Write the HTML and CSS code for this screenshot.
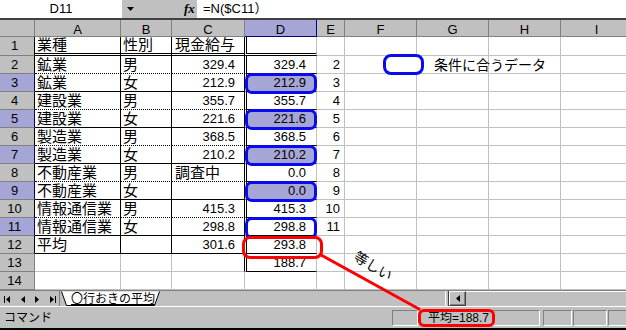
FILE: index.html
```html
<!DOCTYPE html>
<html lang="ja">
<head>
<meta charset="utf-8">
<title>行おきの平均</title>
<link rel="stylesheet" href="styles.css">
</head>
<body>
<div class="app">
  <div class="fbar">
    <div class="namebox">D11</div>
    <div class="fbtns">
      <svg class="dd" width="7" height="4" viewBox="0 0 7 4"><path d="M0 0h7L3.5 4z"/></svg>
      <span class="fx"><i>f</i>x</span>
    </div>
    <div class="formula">=N($C11）</div>
  </div>

  <div class="sheet">
    <div class="ch"></div><div class="ch">A</div><div class="ch">B</div><div class="ch">C</div><div class="ch sel">D</div><div class="ch">E</div><div class="ch">F</div><div class="ch">G</div><div class="ch">H</div><div class="ch">I</div>

    <div class="rh tb">1</div><div class="a x bdbl t">業種</div><div class="b x bdbl t">性別</div><div class="cc x bdbl t">現金給与</div><div class="d dl bdbl"></div><div class="e"></div><div></div><div></div><div></div><div></div>

    <div class="rh tb">2</div><div class="a x bd t">鉱業</div><div class="b x bd t">男</div><div class="cc x bd n">329.4</div><div class="d dl bs n">329.4</div><div class="e">2</div><div class="f"><div class="legend"><span class="lbox"></span><span class="ltxt">条件に合うデータ</span></div></div><div></div><div></div><div></div>

    <div class="rh tb sel">3</div><div class="a x bs t">鉱業</div><div class="b x bs t">女</div><div class="cc x bs n">212.9</div><div class="d dl bs"><div class="hl">212.9</div></div><div class="e">3</div><div></div><div></div><div></div><div></div>

    <div class="rh tb">4</div><div class="a x bd t">建設業</div><div class="b x bd t">男</div><div class="cc x bd n">355.7</div><div class="d dl bs n">355.7</div><div class="e">4</div><div></div><div></div><div></div><div></div>

    <div class="rh tb sel">5</div><div class="a x bs t">建設業</div><div class="b x bs t">女</div><div class="cc x bs n">221.6</div><div class="d dl bs"><div class="hl">221.6</div></div><div class="e">5</div><div></div><div></div><div></div><div></div>

    <div class="rh tb">6</div><div class="a x bd t">製造業</div><div class="b x bd t">男</div><div class="cc x bd n">368.5</div><div class="d dl bs n">368.5</div><div class="e">6</div><div></div><div></div><div></div><div></div>

    <div class="rh tb sel">7</div><div class="a x bs t">製造業</div><div class="b x bs t">女</div><div class="cc x bs n">210.2</div><div class="d dl bs"><div class="hl">210.2</div></div><div class="e">7</div><div></div><div></div><div></div><div></div>

    <div class="rh tb">8</div><div class="a x bd t">不動産業</div><div class="b x bd t">男</div><div class="cc x bd t">調査中</div><div class="d dl bs n">0.0</div><div class="e">8</div><div></div><div></div><div></div><div></div>

    <div class="rh tb sel">9</div><div class="a x bs t">不動産業</div><div class="b x bs t">女</div><div class="cc x bs"></div><div class="d dl bs"><div class="hl">0.0</div></div><div class="e">9</div><div></div><div></div><div></div><div></div>

    <div class="rh tb">10</div><div class="a x bd t">情報通信業</div><div class="b x bd t">男</div><div class="cc x bd n">415.3</div><div class="d dl bs n">415.3</div><div class="e">10</div><div></div><div></div><div></div><div></div>

    <div class="rh tb sel">11</div><div class="a x bs t">情報通信業</div><div class="b x bs t">女</div><div class="cc x bs n">298.8</div><div class="d dl bs n">298.8<div class="ol"></div></div><div class="e">11</div><div></div><div></div><div></div><div></div>

    <div class="rh tb">12</div><div class="a x bs t">平均</div><div class="b x bs"></div><div class="cc x bs n">301.6</div><div class="d dl bs n">293.8<div class="rb"></div></div><div class="e"></div><div></div><div></div><div></div><div></div>

    <div class="rh">13</div><div class="a"></div><div class="b"></div><div class="cc x"></div><div class="d dl bs n">188.7</div><div class="e"></div><div></div><div></div><div></div><div></div>

    <div class="rh">14</div><div class="a"></div><div class="b"></div><div class="cc"></div><div class="d"></div><div class="e"></div><div></div><div></div><div></div><div></div>
  </div>

  <div class="tabbar">
    <svg class="nav" width="59" height="15" viewBox="0 0 59 15">
      <rect x="4" y="5" width="1" height="7"/>
      <path d="M10 5v7L6 8.5z"/>
      <path d="M25 5v7L21 8.5z"/>
      <path d="M35 5v7L39 8.5z"/>
      <path d="M50 5v7L54 8.5z"/>
      <rect x="55" y="5" width="1" height="7"/>
    </svg>
    <div class="tab">
      <svg class="tabshape" width="104" height="15" viewBox="0 0 104 15"><path d="M0.5 0v15" stroke="#808080" fill="none"/><path d="M2.5 0.5 L7.5 14.5 L95.5 14.5 L100.5 0.5" fill="#fff" stroke="#000"/></svg>
      <span class="tabtxt">〇行おきの平均</span>
    </div>
    <div class="hs">
      <div class="split"></div>
      <div class="sbtn"><svg width="4" height="7" viewBox="0 0 4 7"><path d="M4 0v7L0 3.5z"/></svg></div>
      <div class="track"></div>
    </div>
  </div>

  <div class="status">
    <div class="msg">コマンド</div>
    <div class="p p1"></div>
    <div class="p p2">平均=188.7<div class="rbs"></div></div>
    <div class="p p3"></div>
    <div class="p p4"></div>
    <div class="p p5"></div>
  </div>

  <svg class="callout" width="626" height="330" viewBox="0 0 626 330">
    <line x1="321" y1="255" x2="419" y2="309" stroke="#ff0000" stroke-width="3" stroke-linecap="round"/>
    <text x="373" y="271" transform="rotate(31 373 266)" text-anchor="middle" class="eq">等しい</text>
  </svg>
</div>
</body>
</html>
```

FILE: styles.css
```css
* { box-sizing: border-box; margin: 0; padding: 0; }
html, body { width: 626px; height: 330px; overflow: hidden; background: #fff; }
body {
  font-family: "Liberation Sans", "Noto Sans CJK JP", sans-serif;
  font-size: 13px;
  color: #000;
}
.app { position: relative; width: 626px; height: 330px; overflow: hidden; }

/* formula bar */
.fbar { display: flex; height: 20px; border-bottom: 2px solid #404040; }
.namebox { width: 122px; flex: none; text-align: center; line-height: 18px; }
.fbtns { width: 75px; flex: none; background: #c0c0c0; display: flex; align-items: center; }
.dd { margin-left: 5px; display: block; }
.fx { margin-left: 50px; font-family: "Liberation Serif", serif; font-style: italic; font-weight: bold; font-size: 13px; line-height: 18px; }
.formula { flex: 1; padding-left: 6px; line-height: 18px; }

/* grid */
.sheet {
  display: grid;
  grid-template-columns: 35px 86px 51px 73px 72px 28px 72px 72px 72px 72px;
  grid-template-rows: 17px 19px repeat(13, 18px);
  width: 633px;
}
.sheet > div {
  border-right: 1px solid #c0c0c0;
  border-bottom: 1px solid #c0c0c0;
  white-space: nowrap;
  line-height: 17px;
  position: relative;
}
.sheet > .ch {
  background: #c0c0c0;
  border-right-color: #808080;
  border-bottom-color: #808080;
  text-align: center;
  line-height: 16px;
  padding-top: 2px;
}
.sheet > .ch.sel { background: #a6a6d6; border-right-color: #000080; border-bottom-color: #000080; }
.sheet > .rh {
  background: #c0c0c0;
  border-right-color: #808080;
  border-bottom-color: #808080;
  text-align: center;
  padding-right: 5px;
}
.sheet > .rh.tb { border-right-color: #000; }
.sheet > .rh.sel { background: #a6a6d6; border-right-color: #000080; }

.sheet > .a { padding-left: 2px; }
.sheet > .b { padding-left: 2px; }
.sheet > .cc { padding-left: 3px; }
.sheet > .n { text-align: right; }
.sheet > .cc.n { padding-left: 0; padding-right: 9px; }
.sheet > .d.n { padding-right: 10px; }
.sheet > .e { text-align: right; padding-right: 4px; }
.sheet > .t { font-size: 15px; }

.sheet > .x { border-right-color: #000; }
.sheet > .bd { border-bottom: 1px dotted #000; }
.sheet > .bs { border-bottom-color: #000; }
.sheet > .bdbl { border-bottom: 3px double #000; line-height: 16px; }
.sheet > .dl { border-left: 1px solid #fff; box-shadow: inset 1px 0 0 #000; }

.hl {
  position: absolute;
  left: -1px; top: -1px;
  width: 72px; height: 21px;
  border: 3px solid #0a0af0;
  border-radius: 7px;
  background: #a6a6d6;
  text-align: right;
  padding-right: 8px;
  line-height: 13px;
}
.ol {
  position: absolute;
  left: -1px; top: -1px;
  width: 72px; height: 22px;
  border: 3px solid #0a0af0;
  border-radius: 7px;
}
.rb {
  position: absolute;
  left: -4px; top: 0;
  width: 81px; height: 23px;
  border: 3px solid #ff0000;
  border-radius: 8px;
  z-index: 2;
}

.legend { position: absolute; left: 38px; top: -2px; display: flex; align-items: center; z-index: 1; }
.lbox { width: 41px; height: 21px; border: 3px solid #0a0af0; border-radius: 8px; background: #fff; }
.ltxt { margin-left: 10px; font-size: 14px; line-height: 20px; }

/* sheet tabs */
.tabbar { display: flex; height: 16px; background: #c0c0c0; border-top: 1px solid #808080; }
.nav { display: block; flex: none; }
.tab { position: relative; width: 104px; height: 15px; flex: none; padding-left: 12px; }
.tabshape { position: absolute; left: 0; top: 0; }
.tabtxt { position: relative; font-family: "Noto Sans CJK JP", sans-serif; font-size: 12px; line-height: 14px; text-decoration: underline; }
.hs { margin-left: auto; width: 181px; flex: none; display: flex; height: 15px; }
.split { width: 4px; border-left: 1px solid #fff; border-right: 1px solid #404040; background: #c0c0c0; }
.sbtn {
  width: 17px;
  border-top: 1px solid #fff; border-left: 1px solid #fff;
  border-right: 1px solid #404040; border-bottom: 1px solid #404040;
  box-shadow: inset -1px -1px 0 #808080;
  display: flex; align-items: center; justify-content: center;
}
.sbtn svg { display: block; }
.track { flex: 1; border-top: 1px solid #fff; background: #c0c0c0; }

/* status bar */
.status {
  display: flex; align-items: center;
  height: 24px;
  background: #c0c0c0;
  border-top: 1px solid #fff;
  border-bottom: 2px solid #000;
  overflow: hidden;
}
.msg { width: 392px; flex: none; padding-left: 4px; font-size: 12px; line-height: 14px; }
.p {
  height: 16px;
  border: 1px solid; border-color: #808080 #fff #fff #808080;
  font-size: 12px; line-height: 14px;
  position: relative; flex: none;
}
.p1 { width: 26px; }
.p2 { width: 120px; margin-left: 2px; padding-left: 7px; }
.p3 { width: 29px; margin-left: 3px; }
.p4 { width: 34px; margin-left: 1px; }
.p5 { width: 33px; margin-left: 1px; }
.rbs {
  position: absolute;
  left: -3px; top: -2px;
  width: 77px; height: 18px;
  border: 3px solid #ff0000;
  border-radius: 6px;
}

.callout { position: absolute; left: 0; top: 0; pointer-events: none; z-index: 5; }
.eq { font-family: "Noto Sans CJK JP", sans-serif; font-size: 14px; }
```
